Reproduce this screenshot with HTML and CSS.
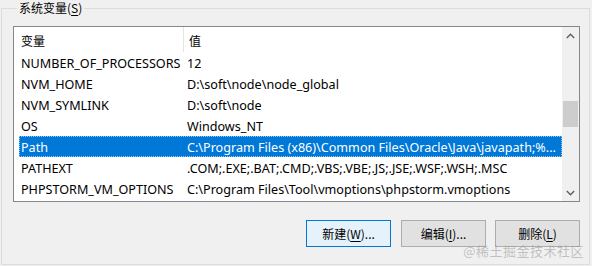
FILE: index.html
```html
<!DOCTYPE html>
<html lang="zh-CN">
<head>
<meta charset="utf-8">
<link rel="stylesheet" href="styles.css">
</head>
<body>
<fieldset class="group">
  <legend class="group-title">系统变量(<u>S</u>)</legend>
  <div class="listbox">
    <div class="list-main">
      <div class="list-head">
        <div class="head-cell head-name">变量</div>
        <div class="head-cell head-value">值</div>
      </div>
      <div class="rows">
        <div class="row"><span class="c1">NUMBER_OF_PROCESSORS</span><span class="c2">12</span></div>
        <div class="row"><span class="c1">NVM_HOME</span><span class="c2">D:\soft\node\node_global</span></div>
        <div class="row"><span class="c1">NVM_SYMLINK</span><span class="c2">D:\soft\node</span></div>
        <div class="row"><span class="c1">OS</span><span class="c2">Windows_NT</span></div>
        <div class="row selected"><span class="c1">Path</span><span class="c2">C:\Program Files (x86)\Common Files\Oracle\Java\javapath;%...</span></div>
        <div class="row"><span class="c1">PATHEXT</span><span class="c2">.COM;.EXE;.BAT;.CMD;.VBS;.VBE;.JS;.JSE;.WSF;.WSH;.MSC</span></div>
        <div class="row"><span class="c1">PHPSTORM_VM_OPTIONS</span><span class="c2">C:\Program Files\Tool\vmoptions\phpstorm.vmoptions</span></div>
      </div>
    </div>
    <div class="scrollbar">
      <div class="arrow">
        <svg width="9" height="6" viewBox="0 0 9 6"><path d="M0.8 5 L4.5 1.3 L8.2 5" fill="none" stroke="#606060" stroke-width="1.4"/></svg>
      </div>
      <div class="track">
        <div class="thumb"></div>
      </div>
      <div class="arrow">
        <svg width="9" height="6" viewBox="0 0 9 6"><path d="M0.8 1 L4.5 4.7 L8.2 1" fill="none" stroke="#606060" stroke-width="1.4"/></svg>
      </div>
    </div>
  </div>
  <div class="buttons">
    <button class="btn default">新建(<u>W</u>)...</button>
    <button class="btn">编辑(<u>I</u>)...</button>
    <button class="btn">删除(<u>L</u>)</button>
  </div>
  <div class="watermark">@稀土掘金技术社区</div>
</fieldset>
</body>
</html>
```

FILE: styles.css
```css
html, body {
  margin: 0;
  padding: 0;
  background: #f0f0f0;
}
body {
  width: 592px;
  height: 266px;
  overflow: hidden;
  font-family: "Noto Sans", "Noto Sans CJK SC", sans-serif;
  font-size: 12px;
  color: #000;
}
.group {
  position: relative;
  box-sizing: border-box;
  margin: 0 0 0 1px;
  width: 589px;
  height: 265px;
  border: 1px solid #dcdcdc;
  padding: 10px 9px 0 11px;
  min-width: 0;
}
.group-title {
  padding: 0 2px;
  margin-left: 4px;
  line-height: 16px;
  font-family: "Noto Sans CJK SC", sans-serif;
  color: #000;
}
.group-title u, .btn u {
  text-decoration-thickness: 1px;
  text-underline-offset: 2px;
}
.listbox {
  display: flex;
  width: 567px;
  height: 176px;
  box-sizing: border-box;
  border: 1px solid #828790;
  background: #fff;
}
.list-main {
  flex: 1;
  display: flex;
  flex-direction: column;
  min-width: 0;
}
.list-head {
  display: flex;
  height: 25px;
  align-items: stretch;
}
.head-cell {
  display: flex;
  align-items: center;
  padding-top: 1px;
  font-family: "Noto Sans CJK SC", sans-serif;
}
.head-name {
  width: 162px;
  padding-left: 7px;
  border-right: 1px solid #e5e5e5;
}
.head-value {
  padding-left: 5px;
}
.rows {
  padding-left: 5px;
  font-size: 12.6px;
}
.row {
  display: flex;
  height: 21px;
  align-items: center;
  padding-top: 1px;
  box-sizing: border-box;
  white-space: nowrap;
}
.c1 {
  width: 168px;
  padding-left: 2px;
  flex-shrink: 0;
  box-sizing: border-box;
}
.c2 {
  overflow: hidden;
}
.row.selected {
  background: #0078d7;
  color: #fff;
  outline: 1px dotted #9cc8ef;
  outline-offset: -1px;
}
.scrollbar {
  width: 17px;
  display: flex;
  flex-direction: column;
  background: #f0f0f0;
}
.arrow {
  height: 17px;
  display: flex;
  align-items: center;
  justify-content: center;
}
.track {
  flex: 1;
  padding-top: 57px;
}
.thumb {
  margin: 0 1px;
  height: 26px;
  background: #cdcdcd;
}
.buttons {
  display: flex;
  justify-content: flex-end;
  gap: 9px;
  width: 567px;
  margin-top: 18px;
}
.btn {
  width: 85px;
  height: 27px;
  box-sizing: border-box;
  border: 1px solid #adadad;
  background: #e1e1e1;
  font-family: "Noto Sans CJK SC", sans-serif;
  font-size: 12px;
  color: #000;
  padding: 0;
}
.btn.default {
  border-color: #0078d7;
  background: #e5f1fb;
  margin-right: 1px;
}
.watermark {
  position: absolute;
  right: 5px;
  bottom: 5px;
  font-family: "Noto Sans CJK SC", sans-serif;
  font-size: 13px;
  line-height: 16px;
  color: rgba(150, 150, 150, 0.55);
  letter-spacing: 0.5px;
}
```
